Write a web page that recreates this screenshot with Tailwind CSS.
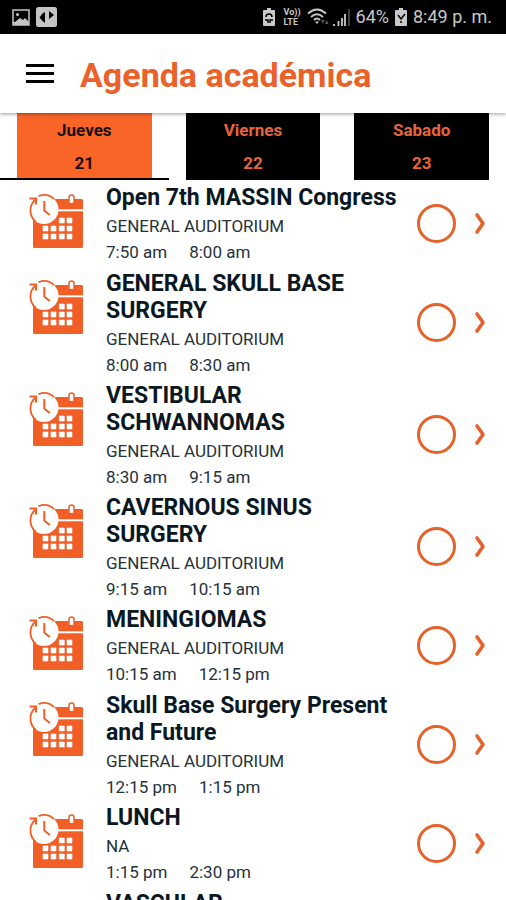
<!DOCTYPE html>
<html lang="es">
<head>
<meta charset="utf-8">
<meta name="viewport" content="width=device-width, initial-scale=1">
<title>Agenda académica</title>
<script src="https://cdn.jsdelivr.net/npm/@tailwindcss/browser@4"></script>
</head>
<body class="flex h-screen flex-col overflow-hidden bg-white font-['Roboto',sans-serif] text-[#0b1822]">

<svg class="hidden" aria-hidden="true">
  <symbol id="calendar" viewBox="0 0 56 56">
    <rect x="5" y="6" width="50" height="49" rx="1.5" fill="#f15f27"/>
    <path d="M41 9.500V4.500a2.500 2.500 0 0 1 5 0v5" fill="#fff" stroke="#f15f27" stroke-width="1.500"/>
    <path d="M42.500 4.500a1 1 0 0 1 2 0V10h-2z" fill="#fff"/>
    <path d="M30 17.300h25" stroke="#fff" stroke-width="2"/>
    <circle cx="16" cy="16.500" r="14.500" fill="#fff"/>
    <path d="M10.500 3.200A14.500 14.500 0 0 1 26 6M7.500 6.500A14.500 14.500 0 0 0 7.500 28.500" fill="none" stroke="#f15f27" stroke-width="1.800"/>
    <path d="M1.500 5.500H8V11.500" fill="none" stroke="#f15f27" stroke-width="2.200"/>
    <path d="M16.300 8v9.500l5.500 4.500" fill="none" stroke="#f15f27" stroke-width="2"/>
    <path d="M31.300 25h5v5h-5zM39 25h5v5h-5zM15 33h5v5h-5zM23 33h5v5h-5zM31.300 33h5v5h-5zM39 33h5v5h-5zM15 41h5v5h-5zM23 41h5v5h-5zM31.300 41h5v5h-5zM39 41h5v5h-5z" fill="#fff" stroke="#fff" stroke-width=".6"/>
  </symbol>
  <symbol id="chevron" viewBox="0 0 12 24">
    <path d="M3 4 9 12.500 3 21" fill="none" stroke="#e5622b" stroke-width="3.600" stroke-linecap="round" stroke-linejoin="round"/>
  </symbol>
</svg>

<div class="flex h-[34px] shrink-0 items-center bg-black pr-[14px] pl-3 text-lg text-[#c9c9c9]">
  <svg class="h-[17px] w-[18px]" viewBox="0 0 18 17"><rect x="1" y="1" width="16" height="15" fill="none" stroke="#c4c4c4" stroke-width="1.500"/><path d="M1 13v3h16v-3l-4-4-2 2-3-2-5 4z" fill="#c4c4c4"/><circle cx="5.500" cy="5.500" r="1.500" fill="#c4c4c4"/></svg>
  <svg class="ml-1.5 h-5 w-[21px]" viewBox="0 0 21 20"><rect width="21" height="20" rx="2.500" fill="#c4c4c4"/><path d="M3.500 10.500 6.500 6.500 9 5v11l-2.500-2zM13 4l5 4-5 4z" fill="#000"/></svg>
  <div class="ml-auto flex items-center">
    <svg class="h-[18px] w-3" viewBox="0 0 12 18"><path d="M4 0h4v2h3q1 0 1 1v14q0 1-1 1H1q-1 0-1-1V3q0-1 1-1h3z" fill="#c9c9c9"/><path d="M3 9a3 3 0 0 1 6 0M2 12h3v3M10 12H7v3" stroke="#000" stroke-width="1.500" fill="none"/></svg>
    <span class="ml-2 flex flex-col text-[9px] leading-[10px] font-bold"><span>Vo))</span><span>LTE</span></span>
    <svg class="ml-1.5 h-[18px] w-[22px]" viewBox="0 0 22 18"><path d="M1 5.500q9-8 18 0M4 9q6-5.500 12 0M7 12q3-3 6 0" fill="none" stroke="#c9c9c9" stroke-width="1.800"/><path d="m8 13.500 2 2.500 2-2.500z" fill="#c9c9c9"/><path d="m14 12 1.800 4 1.800-4zM18 16l1.800-4 1.800 4z" fill="#555"/></svg>
    <svg class="ml-1 h-[17px] w-[17px]" viewBox="0 0 17 17"><path d="M1 15v2M5.500 12v5M9 9v8M12 5v12" stroke="#c9c9c9" stroke-width="1.800"/><path d="M16 0v17" stroke="#555" stroke-width="1.500"/></svg>
    <span class="ml-1.5">64%</span>
    <svg class="ml-1.5 h-[18px] w-3" viewBox="0 0 12 18"><path d="M4 0h4v2h3q1 0 1 1v14q0 1-1 1H1q-1 0-1-1V3q0-1 1-1h3z" fill="#c9c9c9"/><path d="m3 7 3 4 4-5M5 14h2" stroke="#000" stroke-width="1.500" fill="none"/></svg>
    <span class="ml-1.5">8:49 p. m.</span>
  </div>
</div>

<header class="z-10 flex h-[79px] shrink-0 items-center bg-white px-[26px] shadow-[0_1px_4px_rgba(0,0,0,0.4)]">
  <button type="button" aria-label="Menú" class="flex w-7 flex-col gap-[5px]">
    <span class="h-[3px] bg-black"></span><span class="h-[3px] bg-black"></span><span class="h-[3px] bg-black"></span>
  </button>
  <h1 class="ml-[26px] pt-0.5 text-[34px] leading-10 font-bold text-[#ea622a]">Agenda académica</h1>
</header>

<nav class="grid h-[67px] shrink-0 grid-cols-3 text-center text-[17px] leading-[33px] font-bold" aria-label="Días">
  <button type="button" aria-pressed="true" class="relative px-[17px]"><span class="block h-full bg-[#f96527] pt-px text-[#1a0d08]">Jueves<br>21</span><span class="absolute inset-x-0 bottom-0 h-0.5 bg-black"></span></button>
  <button type="button" aria-pressed="false" class="px-[17px]"><span class="block h-full bg-black pt-px text-[#e8643a]">Viernes<br>22</span></button>
  <button type="button" aria-pressed="false" class="px-[17px]"><span class="block h-full bg-black pt-px text-[#e8643a]">Sabado<br>23</span></button>
</nav>

<ul id="agenda" class="min-h-0 flex-1 overflow-y-auto [scrollbar-width:none]"></ul>

<script>
const sessions = [
  ["Open 7th MASSIN Congress", "GENERAL AUDITORIUM", "7:50 am", "8:00 am"],
  ["GENERAL SKULL BASE SURGERY", "GENERAL AUDITORIUM", "8:00 am", "8:30 am"],
  ["VESTIBULAR SCHWANNOMAS", "GENERAL AUDITORIUM", "8:30 am", "9:15 am"],
  ["CAVERNOUS SINUS SURGERY", "GENERAL AUDITORIUM", "9:15 am", "10:15 am"],
  ["MENINGIOMAS", "GENERAL AUDITORIUM", "10:15 am", "12:15 pm"],
  ["Skull Base Surgery Present and Future", "GENERAL AUDITORIUM", "12:15 pm", "1:15 pm"],
  ["LUNCH", "NA", "1:15 pm", "2:30 pm"],
  ["VASCULAR", "", "", ""]
];
document.getElementById("agenda").innerHTML = sessions.map(([title, room, start, end]) => `
  <li class="flex min-h-[86px] items-center pr-5 pl-7">
    <svg class="mt-[13px] h-14 w-14 shrink-0 self-start" aria-hidden="true"><use href="#calendar"/></svg>
    <div class="ml-[22px] min-w-0 flex-1 self-start pt-1 text-[17px] leading-[26px] text-[#26323a]">
      <h2 class="mb-0.5 text-[23px] leading-[27px] font-bold text-[#0b1822]">${title}</h2>
      <p>${room}</p>
      <p class="flex gap-[22px]"><span>${start}</span><span>${end}</span></p>
    </div>
    <input type="checkbox" aria-label="${title}" class="ml-4 size-[39px] shrink-0 appearance-none rounded-full border-3 border-[#e5622b]">
    <button type="button" aria-label="Ver ${title}" class="ml-[18px]"><svg class="h-6 w-3"><use href="#chevron"/></svg></button>
  </li>`).join("");
</script>
</body>
</html>
